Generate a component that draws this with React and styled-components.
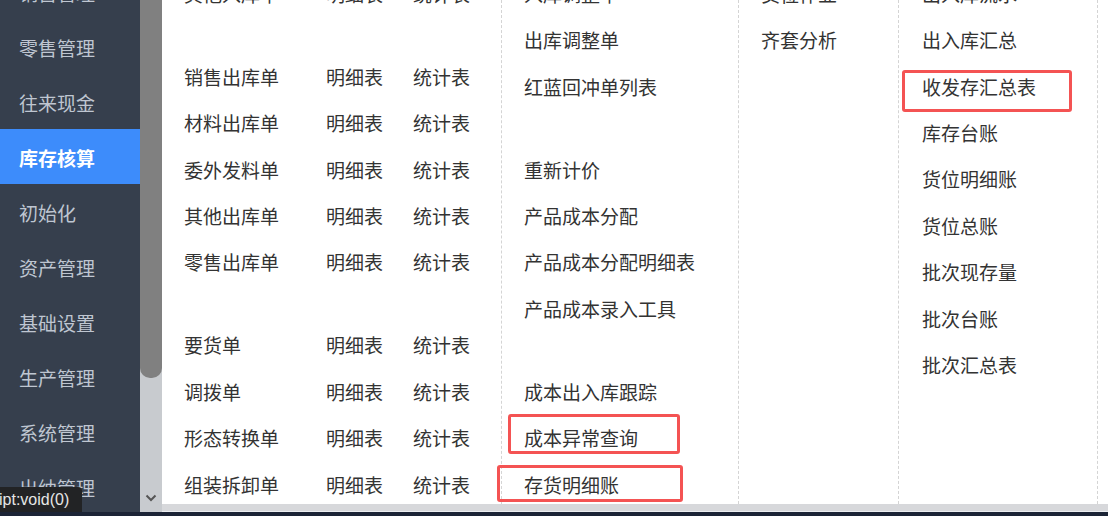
import React from 'react';
import styled, { createGlobalStyle } from 'styled-components';

const GlobalStyle = createGlobalStyle`
	html, body {
		margin: 0;
		padding: 0;
		overflow: hidden;
	}
	body {
		font-family: "Noto Sans CJK SC", "Noto Sans", sans-serif;
	}
`;

const Page = styled.div`
	position: relative;
	width: 1108px;
	height: 516px;
	display: flex;
	flex-direction: column;
	overflow: hidden;
	background: #fff;
`;

const Main = styled.div`
	display: flex;
	height: 512px;
`;

const Sidebar = styled.nav`
	width: 140px;
	flex-shrink: 0;
	background: #363f4d;
	overflow: hidden;
`;

const SideList = styled.ul`
	list-style: none;
	margin: -36px 0 0;
	padding: 0;
`;

const SideItem = styled.li`
	height: 55px;
	display: flex;
	align-items: center;
	padding: 1px 0 0 19px;
	box-sizing: border-box;
	font-size: 19px;
	color: ${(p) => (p.$active ? '#fff' : '#bfc6d1')};
	font-weight: ${(p) => (p.$active ? 700 : 400)};
	background: ${(p) => (p.$active ? '#3d8cfb' : 'transparent')};
`;

const VScroll = styled.div`
	width: 22px;
	flex-shrink: 0;
	background: #c8cbcf;
	display: flex;
	flex-direction: column;
	justify-content: space-between;
	align-items: center;
`;

const Thumb = styled.div`
	width: 22px;
	height: 378px;
	background: #808080;
	border-radius: 0 0 10px 10px;
`;

const Arrow = styled.div`
	height: 24px;
	display: flex;
	align-items: center;
	justify-content: center;
	margin-bottom: 2px;
`;

const ContentWrap = styled.div`
	flex: 1;
	display: flex;
	flex-direction: column;
	min-width: 0;
`;

const Content = styled.div`
	flex: 1;
	display: flex;
	overflow: hidden;
`;

const HScroll = styled.div`
	height: 7px;
	background: #d7d8db;
	border-bottom: 1px solid #eceef1;
`;

const BottomBar = styled.div`
	height: 4px;
	background: #1c2436;
`;

const Column = styled.div`
	width: ${(p) => p.$w}px;
	flex-shrink: 0;
	box-sizing: border-box;
	padding-left: ${(p) => p.$pad || 22}px;
	border-right: 1px dashed #d4d4d4;
`;

const ColInner = styled.div`
	margin-top: -29.8px;
`;

const Group = styled.div`
	margin-bottom: 36.6px;
`;

const Row = styled.div`
	position: relative;
	height: 46.4px;
	display: flex;
	align-items: center;
	font-size: 19px;
	color: #333;
	white-space: nowrap;
`;

const Cell = styled.span`
	width: ${(p) => (p.$w ? `${p.$w}px` : 'auto')};
	flex-shrink: 0;
`;

const Mark = styled.div`
	position: absolute;
	left: ${(p) => p.$l}px;
	top: ${(p) => p.$t}px;
	width: ${(p) => p.$w}px;
	height: ${(p) => p.$h}px;
	box-sizing: border-box;
	border: 3px solid #f45353;
	border-radius: 3px;
`;

const Status = styled.div`
	position: absolute;
	left: 0;
	bottom: 4px;
	width: 82px;
	height: 25px;
	display: flex;
	align-items: center;
	background: #222325;
	border-top-right-radius: 4px;
	color: #e6e6e6;
	font-family: "Liberation Sans", "Noto Sans", sans-serif;
	font-size: 16px;
	white-space: nowrap;
	overflow: hidden;
`;

const StatusText = styled.span`
	margin-left: -1px;
`;

const menu = ['销售管理', '零售管理', '往来现金', '库存核算', '初始化', '资产管理', '基础设置', '生产管理', '系统管理', '出纳管理'];

const col1 = [
	['其他入库单'],
	['销售出库单', '材料出库单', '委外发料单', '其他出库单', '零售出库单'],
	['要货单', '调拨单', '形态转换单', '组装拆卸单'],
];

const col2 = [
	[{ t: '入库调整单' }, { t: '出库调整单' }, { t: '红蓝回冲单列表' }],
	[{ t: '重新计价' }, { t: '产品成本分配' }, { t: '产品成本分配明细表' }, { t: '产品成本录入工具' }],
	[
		{ t: '成本出入库跟踪' },
		{ t: '成本异常查询', m: { l: -16, t: -1, w: 172, h: 40 } },
		{ t: '存货明细账', m: { l: -27, t: 4, w: 186, h: 37 } },
	],
];

const col3 = ['货位作业', '齐套分析'];

const col4 = [
	{ t: '出入库流水' },
	{ t: '出入库汇总' },
	{ t: '收发存汇总表', m: { l: -20, t: 7, w: 170, h: 42 } },
	{ t: '库存台账' },
	{ t: '货位明细账' },
	{ t: '货位总账' },
	{ t: '批次现存量' },
	{ t: '批次台账' },
	{ t: '批次汇总表' },
];

function Item({ t, m }) {
	return (
		<Row>
			{t}
			{m && <Mark $l={m.l} $t={m.t} $w={m.w} $h={m.h} />}
		</Row>
	);
}

export default function App() {
	return (
		<Page>
			<GlobalStyle />
			<Main>
				<Sidebar>
					<SideList>
						{menu.map((name) => (
							<SideItem key={name} $active={name === '库存核算'}>
								{name}
							</SideItem>
						))}
					</SideList>
				</Sidebar>
				<VScroll>
					<Thumb />
					<Arrow>
						<svg width="12" height="8" viewBox="0 0 12 8">
							<path d="M1.5 1.5 L6 6 L10.5 1.5" fill="none" stroke="#555" strokeWidth="2" />
						</svg>
					</Arrow>
				</VScroll>
				<ContentWrap>
					<Content>
						<Column $w={340}>
							<ColInner>
								{col1.map((g, i) => (
									<Group key={i}>
										{g.map((name) => (
											<Row key={name}>
												<Cell $w={142}>{name}</Cell>
												<Cell $w={87}>明细表</Cell>
												<Cell>统计表</Cell>
											</Row>
										))}
									</Group>
								))}
							</ColInner>
						</Column>
						<Column $w={237}>
							<ColInner>
								{col2.map((g, i) => (
									<Group key={i}>
										{g.map((it) => (
											<Item key={it.t} {...it} />
										))}
									</Group>
								))}
							</ColInner>
						</Column>
						<Column $w={160}>
							<ColInner>
								{col3.map((t) => (
									<Item key={t} t={t} />
								))}
							</ColInner>
						</Column>
						<Column $w={199} $pad={23}>
							<ColInner>
								{col4.map((it) => (
									<Item key={it.t} {...it} />
								))}
							</ColInner>
						</Column>
					</Content>
					<HScroll />
				</ContentWrap>
			</Main>
			<BottomBar />
			<Status>
				<StatusText>ipt:void(0)</StatusText>
			</Status>
		</Page>
	);
}
